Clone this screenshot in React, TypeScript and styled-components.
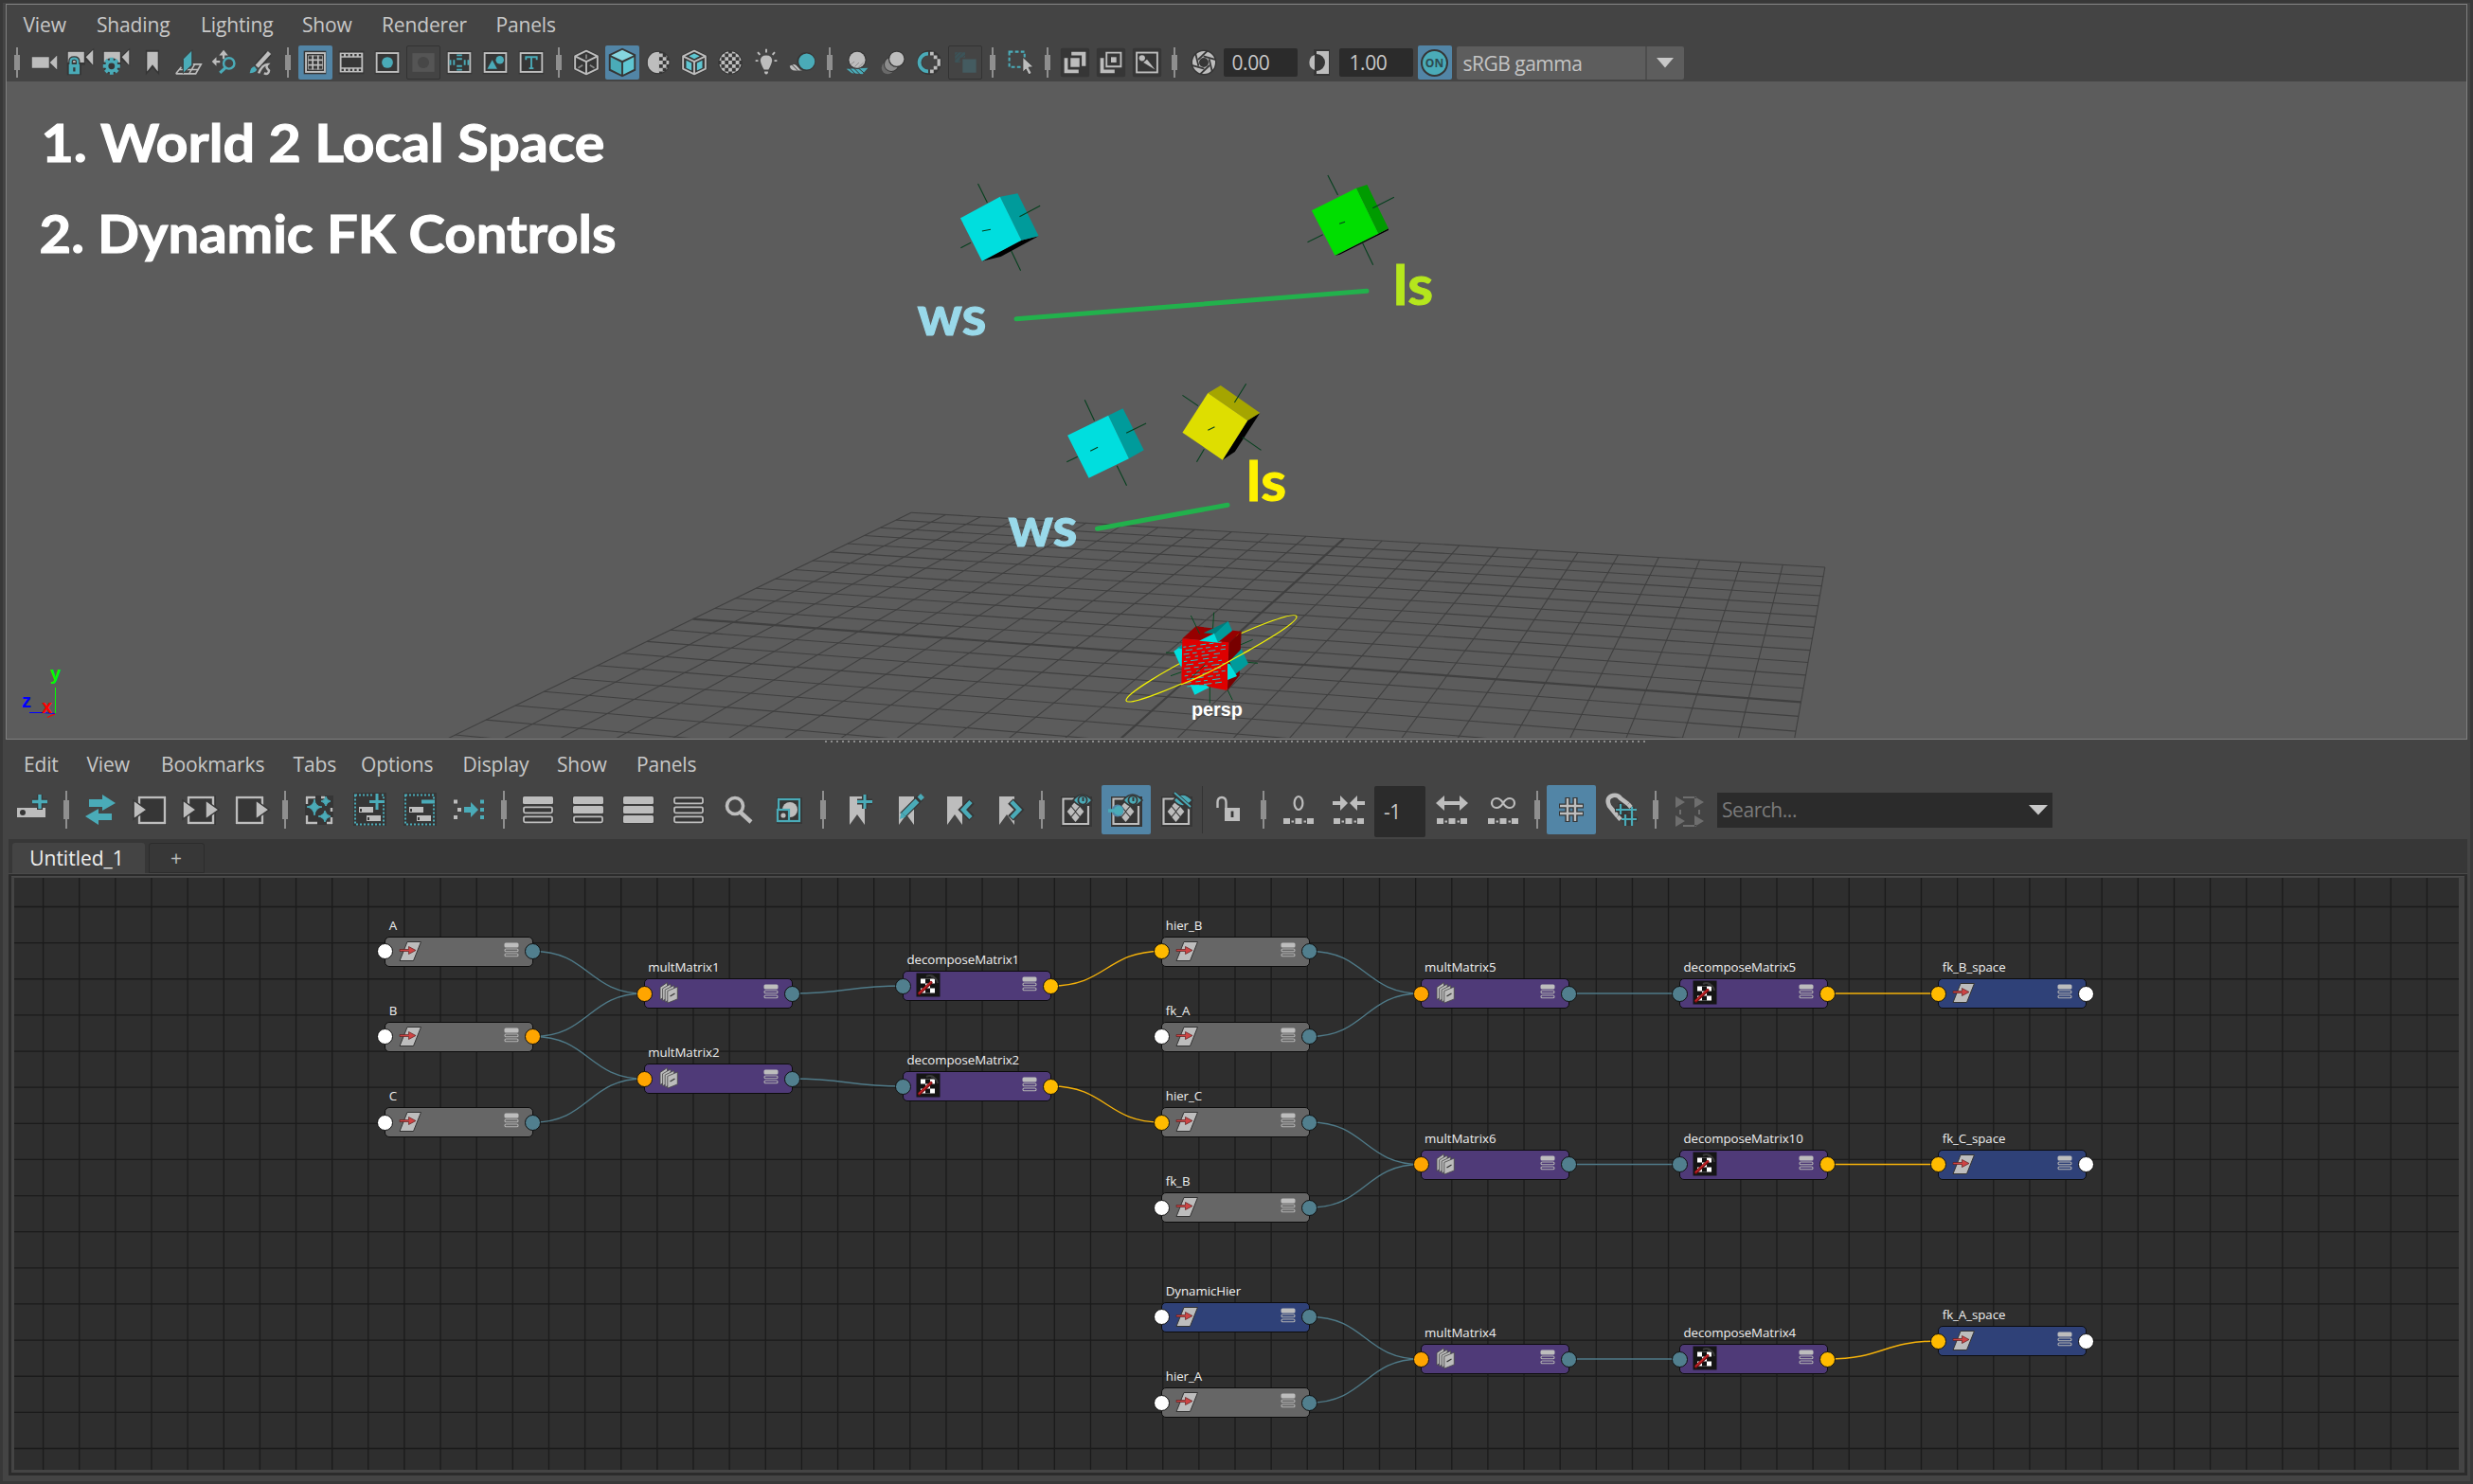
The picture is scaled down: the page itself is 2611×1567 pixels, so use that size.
import React from "react";
import styled, { createGlobalStyle, css } from "styled-components";

const TEAL = "#4aabb8";
const LIGHT = "#bdbdbd";
const DARK = "#363636";
const UI = `"Open Sans", "Noto Sans", sans-serif`;

const Global = createGlobalStyle`
  * { box-sizing: border-box; }
  html, body { margin: 0; padding: 0; background: #383838; }
  body { width: 2611px; height: 1567px; overflow: hidden; font-family: ${UI}; }
`;

/* ---------- frame ---------- */
const Window = styled.div`
  width: 2611px;
  height: 1567px;
  padding: 3px;
  background: #383838;
`;
const Workspace = styled.div`
  display: flex;
  flex-direction: column;
  width: 2605px;
  height: 1561px;
  padding: 1px 3px 6px 3px;
  background: #444444;
`;
const ViewPanel = styled.section`
  display: flex;
  flex-direction: column;
  flex: none;
  height: 777px;
  border: 1px solid #808080;
`;
const MenuBar = styled.nav<{ $h: number; $pad: number }>`
  display: flex;
  align-items: center;
  flex: none;
  height: ${(p) => p.$h}px;
  padding-left: ${(p) => p.$pad}px;
`;
const MenuItem = styled.span<{ $w: number }>`
  width: ${(p) => p.$w}px;
  color: #c8c8c8;
  font-size: 21px;
  line-height: 30px;
  letter-spacing: -0.15px;
  white-space: nowrap;
`;
const Toolbar = styled.div<{ $h: number; $pad: number; $lift?: number }>`
  display: flex;
  align-items: center;
  flex: none;
  height: ${(p) => p.$h}px;
  padding-left: ${(p) => p.$pad}px;
  padding-bottom: ${(p) => p.$lift ?? 0}px;
`;
const Slot = styled.div<{ $w?: number }>`
  display: flex;
  flex: none;
  align-items: center;
  justify-content: center;
  width: ${(p) => p.$w ?? 38}px;
`;
const Btn = styled.div<{ $on?: boolean; $off?: boolean; $big?: boolean }>`
  display: flex;
  align-items: center;
  justify-content: center;
  width: ${(p) => (p.$big ? 52 : 36)}px;
  height: ${(p) => (p.$big ? 52 : 36)}px;
  border-radius: 2px;
  ${(p) => p.$on && css`background: #5285a6;`}
  ${(p) => p.$off && css`border: 1px solid #333333;`}
`;
const SepBox = styled.div<{ $w: number; $h: number }>`
  display: flex;
  flex: none;
  align-items: center;
  justify-content: center;
  width: ${(p) => p.$w}px;
  height: ${(p) => p.$h}px;
  background: linear-gradient(#8f8f8f, #8f8f8f) center / 2px 100% no-repeat,
    linear-gradient(#8f8f8f, #8f8f8f) center / 6px 50% no-repeat;
`;
const Field = styled.div<{ $w: number; $h: number; $ml?: number; $pl: number; $drop?: boolean }>`
  display: flex;
  flex: none;
  align-items: center;
  width: ${(p) => p.$w}px;
  height: ${(p) => p.$h}px;
  margin-left: ${(p) => p.$ml ?? 0}px;
  padding-left: ${(p) => p.$pl}px;
  border-radius: 2px;
  background: #2b2b2b;
  color: #c8c8c8;
  font-size: 21px;
  letter-spacing: -0.4px;
  ${(p) => p.$drop && css`
    align-self: flex-end;
    margin-bottom: -3px;
  `}
`;
const Combo = styled.div`
  display: flex;
  flex: none;
  width: 240px;
  height: 35px;
  border-radius: 2px;
  background: #5d5d5d;
  color: #c4c4c4;
  font-size: 21px;
  line-height: 37px;
  letter-spacing: -0.5px;
`;
const ComboText = styled.span`
  width: 201px;
  padding-left: 7px;
  border-right: 2px solid #4d4d4d;
`;
const ComboArrow = styled.span`
  display: flex;
  flex: 1;
  align-items: center;
  justify-content: center;
`;
const Search = styled.div`
  display: flex;
  flex: none;
  align-items: center;
  justify-content: space-between;
  width: 354px;
  height: 37px;
  margin-left: 3px;
  padding: 0 5px;
  background: #2b2b2b;
  color: #7a7a7a;
  font-size: 21px;
  letter-spacing: -0.45px;
`;
const Viewport = styled.div`
  flex: 1;
  min-height: 0;
  overflow: hidden;
  background: #5c5c5c;
`;
const Scene = styled.svg`
  display: block;
`;

const Splitter = styled.div`
  flex: none;
  width: 867px;
  height: 2px;
  margin: 1px 0 0 865px;
  background: repeating-linear-gradient(90deg, #8c8c8c 0 2px, transparent 2px 6px);
`;
const EditorPanel = styled.section`
  display: flex;
  flex-direction: column;
  flex: 1;
  min-height: 0;
`;
const TabBar = styled.div`
  display: flex;
  align-items: flex-end;
  flex: none;
  gap: 4px;
  height: 36px;
  margin: 0 0 0 3px;
  padding-left: 4px;
  background: #373737;
`;
const Tab = styled.div<{ $active?: boolean }>`
  display: flex;
  align-items: center;
  justify-content: center;
  width: ${(p) => (p.$active ? 140 : 59)}px;
  height: 32px;
  border-radius: 3px 3px 0 0;
  color: ${(p) => (p.$active ? "#eeeeee" : "#bbbbbb")};
  background: ${(p) => (p.$active ? "#444444" : "#373737")};
  border: ${(p) => (p.$active ? "none" : "1px solid #2c2c2c")};
  font-size: 21px;
  padding-right: ${(p) => (p.$active ? 4 : 1)}px;
`;
const CanvasFrame = styled.div`
  flex: 1;
  min-height: 0;
  margin: 0 0 0 3px;
  border: 3px solid #2b2b2b;
  border-top: 2px solid #2b2b2b;
  box-shadow: inset 0 1px 0 #4a4a4a;
  background: #444444;
  padding: 2px 3px 3px 3px;
`;
const Canvas = styled.div`
  position: relative;
  width: 2581px;
  height: 625px;
  overflow: hidden;
  background: #2e2e2e;
`;
const TabEdge = styled.div`
  flex: none;
  height: 1px;
  margin-left: 3px;
  background: #4a4a4a;
`;

/* ---------- icons ---------- */
const Ico = ({ children, s = 38 }: { children: React.ReactNode; s?: number }) => (
  <svg width={s} height={s} viewBox={`${-s / 2} ${-s / 2} ${s} ${s}`} fill="none">
    {children}
  </svg>
);

const Frame = ({ children }: { children?: React.ReactNode }) => (
  <>
    <rect x={-14} y={-13} width={28} height={26} fill={DARK} />
    <rect x={-12} y={-10.5} width={24} height={21} stroke={LIGHT} strokeWidth={2} />
    {children}
  </>
);
const Checks = ({ x0, y0, n, m, s, fill }: { x0: number; y0: number; n: number; m: number; s: number; fill: string }) => {
  let d = "";
  for (let i = 0; i < n; i++)
    for (let j = 0; j < m; j++) if ((i + j) % 2 === 0) d += `M${x0 + i * s} ${y0 + j * s}h${s}v${s}h${-s}z`;
  return <path d={d} fill={fill} />;
};
const Gear = () => (
  <g transform="translate(-5.5 4)">
    {[0, 45, 90, 135].map((a) => (
      <rect key={a} x={-2} y={-9.5} width={4} height={19} fill={TEAL} transform={`rotate(${a})`} />
    ))}
    <circle r={7} fill={TEAL} />
    <circle r={3.6} fill={DARK} />
  </g>
);
const SmallCam = () => (
  <>
    <path d="M-15 -13H5V-7L15 -16V4L5 -3V3H-15Z" fill={DARK} />
    <path d="M-14 -12H4V0H-14ZM6 -6L14 -14V3Z" fill={LIGHT} />
  </>
);
const CubeWire = ({ c = LIGHT }: { c?: string }) => (
  <path d="M0 -13L12.5 -7V7L0 13L-12.5 7V-7ZM-12.5 -7L0 -1L12.5 -7M0 -1V13" stroke={c} strokeWidth={2} strokeLinejoin="round" />
);

const topIcons: Record<string, React.ReactNode> = {
  cam: <path d="M-14 -6H5V6H-14ZM6 0L14 -8V8Z" fill={LIGHT} stroke={DARK} strokeWidth={1} paintOrder="stroke" />,
  camLock: (
    <>
      <SmallCam />
      <path d="M-15 1H1V14H-15Z" fill={DARK} />
      <path d="M-11 3V-1Q-11 -4.5 -7 -4.5T-3 -1V3" stroke={DARK} strokeWidth={5} />
      <path d="M-11 3V-1Q-11 -4.5 -7 -4.5T-3 -1V3" stroke={TEAL} strokeWidth={2.4} />
      <rect x={-13} y={2} width={12} height={11} fill={TEAL} />
      <path d="M-7 5.5V10" stroke={DARK} strokeWidth={2.4} />
    </>
  ),
  camGear: (
    <>
      <SmallCam />
      <circle cx={-5.5} cy={4} r={9} fill={DARK} />
      <Gear />
    </>
  ),
  bookmark: (
    <>
      <path d="M-7.5 -14H7.5V14L0 6L-7.5 14Z" fill={DARK} />
      <path d="M-6 -12H6V10L0 2.5L-6 10Z" fill={LIGHT} />
    </>
  ),
  plane: (
    <>
      <path d="M-14 12.5H8L14 2H5" stroke={LIGHT} strokeWidth={1.8} />
      <path d="M-14 12.5L-8 5M1 12L7 2M-10 8H11M-6 12L-1 5" stroke={LIGHT} strokeWidth={1.6} />
      <path d="M-6 -4L4 -14V3L-6 12Z" fill={TEAL} stroke={DARK} strokeWidth={1} />
    </>
  ),
  panZoom: (
    <>
      <path d="M-1 -4V-10M-5 -1H-10" stroke={LIGHT} strokeWidth={2.4} />
      <path d="M-6 -8L-1 -14L4 -8ZM-9 -6L-14 -1L-9 4Z" fill={LIGHT} />
      <circle cx={5} cy={1} r={6} fill="#444444" stroke={TEAL} strokeWidth={2.6} />
      <path d="M1 6L-5 11.5" stroke={TEAL} strokeWidth={3.4} />
    </>
  ),
  brush: (
    <>
      <path d="M9 -10L-4 5" stroke={DARK} strokeWidth={8} />
      <path d="M10 -11L-4 4.5" stroke={LIGHT} strokeWidth={4.6} />
      <path d="M-12 12Q-11 5 -6.5 4.5L-4 8Q-6 12 -12 12Z" fill={TEAL} />
      <path d="M-2 12Q2 2 8 2Q5 5 9.5 9Q9 14 4 12" stroke={LIGHT} strokeWidth={2.6} />
    </>
  ),
  grid: (
    <>
      <rect x={-13} y={-13} width={25} height={26} fill={DARK} />
      <rect x={-10.5} y={-10.5} width={21} height={21} stroke={LIGHT} strokeWidth={2} />
      <path d="M-8 -7.5h16v15h-16z" stroke={LIGHT} strokeWidth={0.8} />
      <path d="M-3 -8V8M3 -8V8M-8 -2.7H8M-8 2.7H8" stroke={LIGHT} strokeWidth={1.8} />
    </>
  ),
  film: (
    <>
      <rect x={-14} y={-13} width={28} height={26} fill={DARK} />
      <rect x={-13} y={-11} width={26} height={22} fill={LIGHT} />
      <rect x={-11} y={-5.5} width={22} height={11} fill={DARK} />
      <path d="M-11 -8.3H12M-11 8.3H12" stroke={DARK} strokeWidth={2.4} strokeDasharray="2.5 2.3" />
    </>
  ),
  gate: (
    <Frame>
      <circle r={6.2} fill={TEAL} />
    </Frame>
  ),
  gateOff: (
    <>
      <rect x={-13} y={-11} width={26} height={22} fill="#555555" />
      <circle r={6.8} fill="#474747" />
    </>
  ),
  fieldChart: (
    <Frame>
      <path d="M-3 -8H3M-3 -4H3M-3 4H3M-3 8H3M-10 -3V3M-6 -3V3M6 -3V3M10 -3V3" stroke={TEAL} strokeWidth={2} />
    </Frame>
  ),
  safeAction: (
    <Frame>
      <path d="M-9 7L-3.5 -3L2 7Z" fill={TEAL} />
      <circle cx={5} cy={-3} r={4.5} fill={TEAL} />
    </Frame>
  ),
  safeTitle: (
    <Frame>
      <path d="M-6 -3V-6H6V-3M0 -6V6.5M-2.5 6.5H2.5" stroke={TEAL} strokeWidth={2} />
    </Frame>
  ),
  wire: (
    <>
      <path d="M0 -15L14.5 -8V8L0 15L-14.5 8V-8Z" fill={DARK} />
      <path d="M0 -9V-4M-9 6L-4 3M9 6L4 3" stroke="#8a8a8a" strokeWidth={1.8} />
      <CubeWire />
    </>
  ),
  shaded: (
    <>
      <path d="M0 -16L15 -9V9L0 16L-15 9V-9Z" fill={DARK} />
      <path d="M0 -14L12.5 -8L0 -2L-12.5 -8Z" fill="#86d6e0" />
      <path d="M-13 -6L-1 0V13.5L-13 7.5Z" fill={TEAL} />
      <path d="M13 -6L1 0V13.5L13 7.5Z" fill="#5fc6d2" />
    </>
  ),
  halfSphere: (
    <>
      <circle r={13} fill={DARK} />
      <clipPath id="hs">
        <circle r={12} />
      </clipPath>
      <g clipPath="url(#hs)">
        <rect x={-12} y={-12} width={13} height={24} fill={LIGHT} />
        <Checks x0={1} y0={-10} n={4} m={7} s={4} fill={LIGHT} />
      </g>
    </>
  ),
  texCube: (
    <>
      <path d="M0 -15L14.5 -8V8L0 15L-14.5 8V-8Z" fill={DARK} />
      <path d="M0 -10L6 -7L0 -4L-6 -7ZM-9 -2.5L-3 .5V9L-9 6ZM9 -2.5L3 .5V9L9 6Z" fill="#5fc6d2" />
      <CubeWire />
    </>
  ),
  checker: (
    <>
      <circle r={13.5} fill={DARK} />
      <clipPath id="ck">
        <circle r={12.3} />
      </clipPath>
      <g clipPath="url(#ck)">
        <Checks x0={-14} y0={-14} n={7} m={7} s={4} fill={LIGHT} />
      </g>
    </>
  ),
  bulb: (
    <>
      <path d="M0 -8Q6.5 -8 6.5 -2Q6 2 2.5 8H-2.5Q-6 2 -6.5 -2Q-6.5 -8 0 -8Z" fill={LIGHT} />
      <path d="M-2 10H2V12L0 13.5L-2 12Z" fill={LIGHT} />
      <path d="M0 -15V-11M-9.5 -11.5L-7 -8.5M9.5 -11.5L7 -8.5M-12 -2H-9M12 -2H9" stroke={LIGHT} strokeWidth={2} />
    </>
  ),
  shadow: (
    <>
      <circle cx={4.5} cy={-1} r={10.5} fill={DARK} />
      <circle cx={5} cy={-1} r={9} fill={TEAL} />
      <path d="M-14 4Q-8 0 -4 5Q-2 8 0 9H-8Q-13 9 -14 4Z" fill={LIGHT} />
      <path d="M-12 2L-5 9M-8 1L-1 9" stroke={DARK} strokeWidth={1} />
    </>
  ),
  ao: (
    <>
      <path d="M-12 7L12 6L6 13L-6 12Z" fill={TEAL} />
      <path d="M-9 6L-2 13M-4 6L3 13M1 6L8 12" stroke={DARK} strokeWidth={1} />
      <circle cy={-3} r={10.3} fill={DARK} />
      <circle cy={-3} r={9} fill={LIGHT} />
      <path d="M-3 5L2 0M1 6L7 0M-7 2L-3 -1" stroke="#8a8a8a" strokeWidth={1} />
    </>
  ),
  blur: (
    <>
      <circle cx={-6} cy={6} r={7} fill="#6a6a6a" />
      <circle cx={-2} cy={2} r={8.5} fill={DARK} />
      <circle cx={-2} cy={2} r={7.5} fill="#8c8c8c" />
      <circle cx={4} cy={-4} r={9.3} fill={DARK} />
      <circle cx={4} cy={-4} r={8} fill={LIGHT} />
    </>
  ),
  aa: (
    <>
      <circle r={11} stroke={DARK} strokeWidth={5.5} />
      <path d="M-1 -10A10 10 0 0 0 -1 10" stroke={TEAL} strokeWidth={4} />
      <path d="M1 -12H5V-8H1ZM5 -8H9V-4H5ZM9 -4H12.5V4H9ZM5 4H9V8H5ZM1 8H5V12H1Z" fill={LIGHT} />
    </>
  ),
  dof: (
    <>
      <rect x={-3} y={-4} width={16} height={16} fill="#445b60" />
      <path d="M-12 -12H0V-6H-6V0H-12Z" fill="#3c5358" />
      <path d="M-12 -8L-8 -12M-12 -3L-3 -12M-8 -1L0 -9" stroke="#444444" strokeWidth={1} />
    </>
  ),
  isolate: (
    <>
      <rect x={-12} y={-12} width={17} height={17} stroke={TEAL} strokeWidth={2.2} strokeDasharray="4 2.4" />
      <path d="M3 -6L15 5L9.5 5.5L13 12L9.5 13.5L6.5 7.5L3 11Z" fill={LIGHT} stroke={DARK} strokeWidth={1} />
    </>
  ),
  xray: (
    <>
      <rect x={-16} y={-16} width={32} height={32} rx={2} fill={DARK} />
      <path d="M-4 -12H12V4H7.5V-8H-4Z" fill={LIGHT} />
      <path d="M-12 -5H-8V8H4V12H-12Z" fill={LIGHT} />
      <path d="M-5 -5H5V5H-5Z" fill={LIGHT} />
    </>
  ),
  xrayActive: (
    <>
      <rect x={-16} y={-16} width={32} height={32} rx={2} fill={DARK} />
      <path d="M-5 -11H11V4.5H-5Z" stroke={LIGHT} strokeWidth={2} />
      <rect x={0} y={-6} width={6} height={6} fill={LIGHT} />
      <path d="M-12 -5H-8V8H4V12H-12Z" fill={LIGHT} />
    </>
  ),
  xrayJoint: (
    <>
      <rect x={-16} y={-16} width={32} height={32} rx={2} fill={DARK} />
      <rect x={-11.5} y={-11} width={23} height={22} stroke={LIGHT} strokeWidth={2} />
      <circle cx={-5.5} cy={-5} r={3.3} fill={LIGHT} />
      <path d="M-4 0L0 -3.5L9 8Z" fill={LIGHT} />
    </>
  ),
  aperture: (
    <>
      <circle r={13.5} fill={DARK} />
      <circle r={8.5} stroke={LIGHT} strokeWidth={7} />
      {[0, 60, 120, 180, 240, 300].map((a) => (
        <path key={a} d="M-6 -3L4 -12.5" stroke={DARK} strokeWidth={1.8} transform={`rotate(${a})`} />
      ))}
    </>
  ),
  gamma: (
    <>
      <rect x={-5} y={-14} width={17} height={28} fill={DARK} />
      <path d="M-4 -8A8.5 8.5 0 0 0 -4 8Z" fill={LIGHT} />
      <path d="M-2 -12H11V12H-2V9A9 9 0 0 0 -2 -9Z" fill={LIGHT} />
    </>
  ),
};
const On = styled.div`
  display: flex;
  align-items: center;
  justify-content: center;
  width: 29px;
  height: 29px;
  border: 2px solid ${DARK};
  border-radius: 50%;
  background: ${TEAL};
  color: #2c4a50;
  font: 700 12px ${UI};
`;

const Bookm = ({ x }: { x: number }) => <path transform={`translate(${x} 0)`} d="M-8 -14H8V16L0 5L-8 16Z" fill={LIGHT} />;
const Bars = ({ open }: { open: boolean[] }) => (
  <>
    <rect x={-17} y={-15} width={34} height={30} rx={2} fill={DARK} opacity={0.5} />
    {open.map((o, i) => (
      <rect
        key={i}
        x={o ? -15 : -16}
        y={-13.5 + i * 10 + (o ? 0.8 : -0.5)}
        width={o ? 30 : 32}
        height={o ? 6 : 8}
        rx={1.5}
        fill={o ? DARK : LIGHT}
        stroke={o ? LIGHT : "none"}
        strokeWidth={1.8}
      />
    ))}
  </>
);
const Dots = () => <path d="M-16 9H-9V15H-16ZM-3.5 9H3.5V15H-3.5ZM9 9H16V15H9ZM-7.5 11.5h2.5v2h-2.5zM5.5 11.5h2.5v2h-2.5z" fill={LIGHT} />;
const Page = () => (
  <>
    <rect x={-16} y={-14} width={33} height={32} fill={DARK} />
    <path d="M-2 -11.5H-13.5V15H13V-4" stroke={LIGHT} strokeWidth={2.2} />
    {[[-5.2, 2], [4.2, 2], [-0.5, -4], [-0.5, 8]].map(([x, y]) => (
      <path key={`${x},${y}`} d={`M${x} ${y - 5}L${x + 4.2} ${y}L${x} ${y + 5}L${x - 4.2} ${y}Z`} fill={LIGHT} />
    ))}
  </>
);
const Eye = () => (
  <>
    <path d="M-3 -10Q6.500 -22 17 -10Q6.500 2 -3 -10Z" fill={TEAL} stroke={DARK} strokeWidth={1.6} />
    <circle cx={7} cy={-10} r={4.6} fill={TEAL} stroke={DARK} strokeWidth={1.8} />
    <path d="M7.5 -13V-9" stroke={DARK} strokeWidth={2} />
  </>
);

const editIcons: Record<string, React.ReactNode> = {
  addNode: (
    <>
      <rect x={-16} y={-2} width={30} height={10} fill={LIGHT} />
      <circle cx={-10} cy={3} r={3} fill={DARK} />
      <path d="M8 -16V0M0 -8.5H16" stroke={DARK} strokeWidth={6} />
      <path d="M8 -16V-1M0 -8.5H16" stroke={TEAL} strokeWidth={3.4} />
    </>
  ),
  swap: (
    <>
      <path d="M-12 -11H2V-16L16 -7L2 1V-3H-12Z" fill={TEAL} />
      <path d="M12 4V11H-2V16L-16 7L-2 -1V4Z" fill={TEAL} />
    </>
  ),
  graphIn: (
    <>
      <rect x={-14} y={-15} width={31} height={31} fill={DARK} />
      <rect x={-12} y={-13} width={27} height={27} stroke={LIGHT} strokeWidth={2.4} />
      <path d="M-18 -10L-4 0L-18 10Z" fill={LIGHT} stroke={DARK} strokeWidth={1.5} />
    </>
  ),
  graphInOut: (
    <>
      <rect x={-15} y={-15} width={31} height={31} fill={DARK} />
      <rect x={-13} y={-13} width={26} height={27} stroke={LIGHT} strokeWidth={2.4} />
      <path d="M-19 -10L-5 0L-19 10ZM5 -10L19 0L5 10Z" fill={LIGHT} stroke={DARK} strokeWidth={1.5} />
    </>
  ),
  graphOut: (
    <>
      <rect x={-17} y={-15} width={31} height={31} fill={DARK} />
      <rect x={-15} y={-13} width={27} height={27} stroke={LIGHT} strokeWidth={2.4} />
      <path d="M5 -10L19 0L5 10Z" fill={LIGHT} stroke={DARK} strokeWidth={1.5} />
    </>
  ),
  rearrange: (
    <>
      <rect x={-15} y={-15} width={30} height={31} fill={DARK} />
      <path d="M-13 -6V-13H-4M2 -13H6M13 -2V2M13 8V14H8M-13 6V14H-2" stroke={LIGHT} strokeWidth={2.4} />
      <path d="M-5 -11Q-4 -3 3 -3Q-4 -2 -5 6Q-6 -2 -13 -3Q-6 -4 -5 -11ZM7 -14Q8 -9.5 12 -9Q8 -8 7 -4Q6 -8 2 -9Q6 -9.5 7 -14ZM6 1Q7 6 12 7Q7 8 6 13Q5 8 -1 7Q5 6 6 1Z" fill={TEAL} stroke={TEAL} strokeWidth={1} strokeLinejoin="round" />
    </>
  ),
  addSel: (
    <>
      <rect x={-17} y={-18} width={35} height={35} fill={DARK} />
      <rect x={-15} y={-15.5} width={30} height={31} stroke={TEAL} strokeWidth={2} strokeDasharray="2 2" />
      <path d="M-11 -3H4V3H-11ZM-3 6H12V12H-3Z" fill={LIGHT} />
      <path d="M-9 -1v3M-1 8v3" stroke={DARK} strokeWidth={2} />
      <path d="M8 -17V0M0 -8.5H16" stroke={DARK} strokeWidth={6} />
      <path d="M8 -17V0M0 -8.5H16" stroke={TEAL} strokeWidth={3} />
    </>
  ),
  removeSel: (
    <>
      <rect x={-17} y={-18} width={35} height={35} fill={DARK} />
      <rect x={-15} y={-15.5} width={30} height={31} stroke={TEAL} strokeWidth={2} strokeDasharray="2 2" />
      <path d="M-11 -3H4V3H-11ZM-3 6H12V12H-3Z" fill={LIGHT} />
      <path d="M-9 -1v3M-1 8v3" stroke={DARK} strokeWidth={2} />
      <path d="M2 -8.5H16" stroke={TEAL} strokeWidth={4} />
    </>
  ),
  pin: (
    <>
      <path d="M-17 -10.5h4v4h-4zM-13 -2h4v4h-4zM-17 6h4v4h-4z" fill={LIGHT} />
      <path d="M-6 -3H1V-8L9 0L1 8V3H-6Z" fill={TEAL} />
      <path d="M11 -10.5h4v4h-4zM11 -2h4v4h-4zM11 6h4v4h-4z" fill={TEAL} />
    </>
  ),
  bars1: <Bars open={[false, true, true]} />,
  bars2: <Bars open={[false, false, true]} />,
  bars3: <Bars open={[false, false, false]} />,
  bars4: <Bars open={[true, true, true]} />,
  lens: (
    <>
      <circle cx={-4} cy={-4} r={8.5} stroke={LIGHT} strokeWidth={3.6} />
      <path d="M2 3L13 13" stroke={LIGHT} strokeWidth={4.4} />
    </>
  ),
  swatch: (
    <>
      <rect x={-13} y={-13} width={27} height={28} fill={DARK} />
      <rect x={-11} y={-11} width={22} height={23} stroke={TEAL} strokeWidth={2.2} />
      <circle cx={1} cy={0} r={8} fill={LIGHT} />
      <rect x={-12} y={0} width={12} height={12} fill={DARK} stroke={TEAL} strokeWidth={2.2} />
      <circle cx={-6} cy={6} r={2.6} fill={LIGHT} />
    </>
  ),
  bmAdd: (
    <>
      <Bookm x={0} />
      <path d="M8 -16V-1M0 -8.5H16" stroke={DARK} strokeWidth={6} />
      <path d="M8 -16V-1M0 -8.5H16" stroke={TEAL} strokeWidth={3} />
    </>
  ),
  bmEdit: (
    <>
      <Bookm x={-1} />
      <path d="M14 -13L-5 6" stroke={DARK} strokeWidth={8} />
      <path d="M16 -15L12.5 -11.5M10.500 -9.500L-4 5" stroke={TEAL} strokeWidth={5.5} />
      <path d="M-8 10L-6.5 2.5L-1.5 7.5Z" fill={TEAL} />
    </>
  ),
  bmPrev: (
    <>
      <Bookm x={-3} />
      <path d="M15 -9L6 0L15 9" stroke={DARK} strokeWidth={8} />
      <path d="M14 -8.5L6 0L14 8.5" stroke={TEAL} strokeWidth={4.5} />
    </>
  ),
  bmNext: (
    <>
      <Bookm x={-1} />
      <path d="M3 -9L12 0L3 9" stroke={DARK} strokeWidth={8} />
      <path d="M4 -8.5L12 0L4 8.5" stroke={TEAL} strokeWidth={4.5} />
    </>
  ),
  eye: (
    <>
      <Page />
      <Eye />
    </>
  ),
  eyePlug: (
    <>
      <Page />
      <circle cx={-9} cy={1} r={6.5} fill="#5285a6" />
      <circle cx={-8} cy={1} r={5} fill={TEAL} />
      <path d="M-19 1H-10" stroke={TEAL} strokeWidth={3.5} />
      <Eye />
    </>
  ),
  eyeOff: (
    <>
      <Page />
      <path d="M-3 -10Q6.500 -22 17 -10Q6.500 2 -3 -10Z" fill={TEAL} stroke={DARK} strokeWidth={1.6} />
      <path d="M-3 -18L15 -2" stroke={DARK} strokeWidth={5} />
      <path d="M-2 -18L15 -3" stroke={TEAL} strokeWidth={1.8} />
    </>
  ),
  unlock: (
    <>
      <path d="M-15 -2V-8Q-15 -13 -10.500 -13T-6 -8V0" stroke={LIGHT} strokeWidth={2.4} transform="translate(3.500 0)" />
      <rect x={-4} y={-2} width={16} height={14} fill={LIGHT} />
      <path d="M4 1.5V8" stroke={DARK} strokeWidth={2.8} />
    </>
  ),
  zero: (
    <>
      <ellipse cx={0} cy={-7} rx={4.4} ry={7} stroke={LIGHT} strokeWidth={2.2} />
      <Dots />
    </>
  ),
  inward: (
    <>
      <path d="M-17 -9H-9V-15L-1 -7L-9 1V-5H-17ZM17 -9H9V-15L1 -7L9 1V-5H17Z" fill={LIGHT} />
      <Dots />
    </>
  ),
  outward: (
    <>
      <path d="M-17 -7L-8 -15V-9H8V-15L17 -7L8 1V-5H-8V1Z" fill={LIGHT} />
      <Dots />
    </>
  ),
  inf: (
    <>
      <path d="M0 -7C-3 -12 -5.5 -12 -7 -12A5 5 0 0 0 -7 -2C-5.5 -2 -3 -2 0 -7C3 -12 5.5 -12 7 -12A5 5 0 0 1 7 -2C5.5 -2 3 -2 0 -7Z" stroke={LIGHT} strokeWidth={2.2} />
      <Dots />
    </>
  ),
  hash: (
    <>
      <path d="M-4 -13V13M4 -13V13M-13 -4H13M-13 4H13" stroke={DARK} strokeWidth={5.2} />
      <path d="M-4 -12V12M4 -12V12M-12 -4H12M-12 4H12" stroke={LIGHT} strokeWidth={2.4} />
    </>
  ),
  magnet: (
    <>
      <path d="M-4 7L-13 -4Q-17 -13 -9 -15Q-4 -16 -1 -12L7 -6" stroke={LIGHT} strokeWidth={4.600} />
      <path d="M-1 -7V7M-7 0H14M4 -4V17M9 4V17M0 10H17" stroke={DARK} strokeWidth={5} />
      <path d="M-1 -6V5M-6 0H16M4 5V17M11 -3V17M0 10H16" stroke={TEAL} strokeWidth={2.2} />
      <path d="M-4 7L-1 10.5M7 -6L10 -2.5" stroke={LIGHT} strokeWidth={4.400} />
    </>
  ),
  expand: (
    <path d="M-15 -14L-5 -8L-15 -2ZM15 -8L5 -14V-2ZM-15 6L-5 12L-15 18ZM15 12L5 6V18ZM-7 -14H7V-12H-7ZM-7 16H7V18H-7ZM-11 0H-9V5H-11ZM9 0H11V5H9Z" fill="#6e6e6e" />
  ),
};

const TOP_BAR: (string | null)[] = [
  null, "cam", "camLock", "camGear", "bookmark", "plane", "panZoom", "brush",
  null, "grid", "film", "gate", "gateOff", "fieldChart", "safeAction", "safeTitle",
  null, "wire", "shaded", "halfSphere", "texCube", "checker", "bulb", "shadow",
  null, "ao", "blur", "aa", "dof",
  null, "isolate",
  null, "xray", "xrayActive", "xrayJoint",
  null,
];
const EDIT_A: (string | null)[] = [
  "addNode", null, "swap", "graphIn", "graphInOut", "graphOut",
  null, "rearrange", "addSel", "removeSel", "pin",
  null, "bars1", "bars2", "bars3", "bars4", "lens", "swatch",
  null, "bmAdd", "bmEdit", "bmPrev", "bmNext",
  null, "eye", "eyePlug", "eyeOff",
];
const LIT = new Set(["grid", "shaded", "eyePlug", "hash"]);
const OFF = new Set(["gateOff", "dof"]);

const EditTool = ({ name, w = 53 }: { name: string; w?: number }) => (
  <Slot $w={w}>
    <Btn $big $on={LIT.has(name)}>
      <Ico s={44}>{editIcons[name]}</Ico>
    </Btn>
  </Slot>
);
const ThinRule = styled.div`
  flex: none;
  width: 1px;
  height: 50px;
  margin-left: 1px;
  background: #333333;
`;

/* ---------- 3D scene ---------- */
/* Perspective map of the ground plane: s runs left-right over the full width, t runs 0 at the back edge to 2 at the front. */
const project = (s: number, t: number): [number, number] => {
  const [x0, y0, x1, y1, x2, y2, x3, y3] = [962.2, 541.3, 1926.8, 599, 1901.5, 741.3, 731.6, 653.7];
  const dx1 = x1 - x2, dx2 = x3 - x2, dx3 = x0 - x1 + x2 - x3;
  const dy1 = y1 - y2, dy2 = y3 - y2, dy3 = y0 - y1 + y2 - y3;
  const den = dx1 * dy2 - dx2 * dy1;
  const g = (dx3 * dy2 - dx2 * dy3) / den;
  const h = (dx1 * dy3 - dx3 * dy1) / den;
  const w = 1 + g * s + h * t;
  return [
    ((x1 - x0 + g * x1) * s + (x3 - x0 + h * x3) * t + x0) / w,
    ((y1 - y0 + g * y1) * s + (y3 - y0 + h * y3) * t + y0) / w,
  ];
};
const GroundGrid = () => (
  <g stroke="#404040">
    {Array.from({ length: 25 }, (_, i) => {
      const a = project(i / 24, 0), b = project(i / 24, 2);
      const c = project(0, i / 12), d = project(1, i / 12);
      const sw = i === 12 ? 2.2 : 1.1;
      return (
        <g key={i} strokeWidth={sw}>
          <line x1={a[0]} y1={a[1]} x2={b[0]} y2={b[1]} />
          <line x1={c[0]} y1={c[1]} x2={d[0]} y2={d[1]} />
        </g>
      );
    })}
  </g>
);

type Cube = { faces: [string, string][]; lines: string };
const CUBES: Cube[] = [
  {
    faces: [
      ["245,317 350,251 396,238 295,303", "#000000"],
      ["293,113 340,103 396,238 350,251", "#009b9b"],
      ["187,181 293,113 350,251 245,317", "#00dede"],
    ],
    lines: "M234 72L259 132M345 176L400 142M188 275L215 259M323 285L348 347M245 222L268 217",
  },
  {
    faces: [
      ["1187,300 1303,230 1330,214 1330,219 1200,296", "#000000"],
      ["1244,86 1273,75 1330,214 1303,230", "#009b00"],
      ["1125,157 1244,86 1303,230 1187,299", "#00de00"],
    ],
    lines: "M1168 45L1195 108M1288 149L1345 115M1114 257L1155 233M1261 260L1289 329M1199 199L1214 193",
  },
  {
    faces: [
      ["582,806 621,784 677,916 637,943", "#009b9b"],
      ["473,869 582,806 637,943 530,1004", "#00dede"],
    ],
    lines: "M519 757L545 823M630 862L683 831M471 953L500 937M605 965L631 1028M534 919L554 907",
  },
  {
    faces: [
      ["954,822 987,798 920,921 887,947", "#000000"],
      ["848,735 882,711 987,798 954,822", "#a5a500"],
      ["780,860 848,735 954,822 887,947", "#dede00"],
    ],
    lines: "M780 742L822 776M950 706L919 765M940 875L990 916M838 913L818 953M848 853L866 842",
  },
];

/* Interpenetrating faces of the two boxes show as broken, slanted scan lines. */
const stripes = () => {
  let d = "";
  for (let r = 0; r < 12; r++) {
    const y = 370 + r * 11.5;
    let x = 448 + ((r * 7) % 13);
    let k = r;
    while (x < 572) {
      const len = 9 + ((k * 13) % 17);
      const e = Math.min(x + len, 582);
      d += `M${x} ${y - (x - 448) * 0.13}L${e} ${y - (e - 448) * 0.13}`;
      x = e + 9 + ((k * 5) % 9);
      k++;
    }
  }
  return d;
};

const Rig = () => (
  <g transform="translate(1100 560) scale(.33333)">
    <ellipse cx={537} cy={406} rx={301} ry={32} transform="rotate(-26.4 537 406)" stroke="#f4f400" strokeWidth={3.6} fill="none" />
    <path d="M472 270L500 328M545 260L541 318M393 387L420 389M668 346L610 371M620 415L684 421M408 461L442 449M532 495L532 548M588 505L604 538" stroke="#064a20" strokeWidth={3} />
    <polygon points="418,383 444,364 444,432 439,430" fill="#00dede" />
    <polygon points="428,372 444,364 444,376" fill="#009b9b" />
    <polygon points="445,343 488,304 632,320 592,357" fill="#960000" />
    <polygon points="592,357 632,320 626,460 588,506" fill="#780000" />
    <polygon points="445,343 592,355 588,500 442,486" fill="#de0000" />
    <polygon points="528,496 588,494 586,507" fill="#de0000" />
    <polygon points="545,325 590,288 603,318 556,356" fill="#009b9b" />
    <polygon points="512,325 590,288 548,328" fill="#007c7c" />
    <polygon points="498,350 546,326 558,356" fill="#00dede" />
    <polygon points="594,415 632,376 654,422 612,457" fill="#009b9b" />
    <polygon points="588,422 596,424 618,462 588,474" fill="#00dede" />
    <polygon points="470,490 484,521 530,498 520,490" fill="#00dede" />
    <path d={stripes()} stroke="#12cfd6" strokeWidth={2.8} />
    <path d="M470 470L517 425M500 328L488 304" stroke="#064a20" strokeWidth={3} />
    <path d="M440 489Q520 458 596 413L660 378" stroke="#f4f400" strokeWidth={3.6} fill="none" />
  </g>
);

const note = (x: number, y: number, w: number, fill: string, size: number, text: string) => (
  <text
    x={x}
    y={y}
    fill={fill}
    stroke={fill}
    strokeWidth={1.1}
    fontSize={size}
    fontWeight={700}
    fontFamily="Lato, Carlito, sans-serif"
    textLength={w}
    lengthAdjust="spacingAndGlyphs"
  >
    {text}
  </text>
);

const SceneView = () => (
  <Scene width={2597} height={693} viewBox="7 86 2597 693" fill="none">
    <GroundGrid />
    <g transform="translate(940 170) scale(.39544 .33333)">
      {CUBES.map((c, i) => (
        <g key={i}>
          {c.faces.map(([p, f]) => (
            <polygon key={p} points={p} fill={f} />
          ))}
          <path d={c.lines} stroke="#06401e" strokeWidth={1.1} vectorEffect="non-scaling-stroke" />
        </g>
      ))}
    </g>
    <g stroke="#22b14c" strokeWidth={5} strokeLinecap="round">
      <line x1={1073} y1={336.7} x2={1443} y2={307.3} />
      <line x1={1158.5} y1={558.3} x2={1296} y2={533.3} />
    </g>
    <Rig />
    {note(43.5, 171, 595, "#ffffff", 55, "1. World 2 Local Space")}
    {note(41.5, 267, 609, "#ffffff", 55, "2. Dynamic FK Controls")}
    {note(968.5, 353.5, 73, "#99d9ea", 57, "ws")}
    {note(1471, 322, 42, "#b5e61d", 57, "ls")}
    {note(1316, 529, 42, "#fff200", 57, "ls")}
    {note(1064.5, 576.5, 73, "#99d9ea", 57, "ws")}
    <text x={1258} y={756} fill="#ffffff" fontFamily="Liberation Sans, Arial, sans-serif" fontWeight={700} fontSize={19.8}>
      persp
    </text>
    <g fontFamily="Liberation Sans, Arial, sans-serif" fontWeight={700} fontSize={20}>
      <path d="M58.5 726V753" stroke="#00ff00" />
      <path d="M31 752.5H45L58 753.5" stroke="#0000ff" strokeWidth={1.2} />
      <path d="M58 754L50 757.5" stroke="#ff0000" strokeWidth={1.2} />
      <text x={53} y={718} fill="#00ff00">y</text>
      <text x={23} y={747} fill="#0000ff">z</text>
      <text x={44} y={753} fill="#ff0000">x</text>
    </g>
  </Scene>
);

/* ---------- node graph ---------- */
const ORANGE = "#ffa500", AMBER = "#ffbb00", PORT = "#517f8e", WHITE = "#ffffff";
const GREY = "#666666", PURPLE = "#4f3a78", BLUE = "#2f4178";
type Kind = "transform" | "mult" | "decompose";
type GraphNode = { id: string; col: number; y: number; fill: string; kind: Kind; in: string; out: string };
const n = (id: string, col: number, y: number, fill: string, kind: Kind, i: string, o: string): GraphNode => ({ id, col, y, fill, kind, in: i, out: o });
const NODES: GraphNode[] = [
  n("A", 0, 77.5, GREY, "transform", WHITE, PORT),
  n("B", 0, 167.5, GREY, "transform", WHITE, ORANGE),
  n("C", 0, 258, GREY, "transform", WHITE, PORT),
  n("multMatrix1", 1, 122, PURPLE, "mult", ORANGE, PORT),
  n("multMatrix2", 1, 212, PURPLE, "mult", ORANGE, PORT),
  n("decomposeMatrix1", 2, 114, PURPLE, "decompose", PORT, AMBER),
  n("decomposeMatrix2", 2, 220, PURPLE, "decompose", PORT, AMBER),
  n("hier_B", 3, 77.5, GREY, "transform", AMBER, PORT),
  n("fk_A", 3, 167.5, GREY, "transform", WHITE, PORT),
  n("hier_C", 3, 258, GREY, "transform", AMBER, PORT),
  n("fk_B", 3, 348, GREY, "transform", WHITE, PORT),
  n("DynamicHier", 3, 463.5, BLUE, "transform", WHITE, PORT),
  n("hier_A", 3, 554, GREY, "transform", WHITE, PORT),
  n("multMatrix5", 4, 122, PURPLE, "mult", ORANGE, PORT),
  n("multMatrix6", 4, 302.5, PURPLE, "mult", ORANGE, PORT),
  n("multMatrix4", 4, 508, PURPLE, "mult", ORANGE, PORT),
  n("decomposeMatrix5", 5, 122, PURPLE, "decompose", PORT, AMBER),
  n("decomposeMatrix10", 5, 302.5, PURPLE, "decompose", PORT, AMBER),
  n("decomposeMatrix4", 5, 508, PURPLE, "decompose", PORT, AMBER),
  n("fk_B_space", 6, 122, BLUE, "transform", AMBER, WHITE),
  n("fk_C_space", 6, 302.5, BLUE, "transform", AMBER, WHITE),
  n("fk_A_space", 6, 489, BLUE, "transform", AMBER, WHITE),
];
const WIRES: [string, string][] = [
  ["A", "multMatrix1"], ["B", "multMatrix1"], ["B", "multMatrix2"], ["C", "multMatrix2"],
  ["multMatrix1", "decomposeMatrix1"], ["multMatrix2", "decomposeMatrix2"],
  ["decomposeMatrix1", "hier_B"], ["decomposeMatrix2", "hier_C"],
  ["hier_B", "multMatrix5"], ["fk_A", "multMatrix5"],
  ["hier_C", "multMatrix6"], ["fk_B", "multMatrix6"],
  ["DynamicHier", "multMatrix4"], ["hier_A", "multMatrix4"],
  ["multMatrix5", "decomposeMatrix5"], ["multMatrix6", "decomposeMatrix10"], ["multMatrix4", "decomposeMatrix4"],
  ["decomposeMatrix5", "fk_B_space"], ["decomposeMatrix10", "fk_C_space"], ["decomposeMatrix4", "fk_A_space"],
];
const left = (col: number) => 391.3 + col * 273.33;

const NodeBox = styled.div<{ $x: number; $y: number }>`
  position: absolute;
  left: ${(p) => p.$x}px;
  top: ${(p) => p.$y - 39}px;
  width: 157px;
`;
const NodeLabel = styled.div`
  height: 23px;
  padding-left: 4.5px;
  color: #eeeeee;
  font-size: 13.3px;
  line-height: 22.5px;
  letter-spacing: -0.06px;
  white-space: nowrap;
`;
const NodeBody = styled.div<{ $fill: string }>`
  display: flex;
  align-items: center;
  justify-content: space-between;
  width: 157px;
  height: 32px;
  border: 1.5px solid #0c0c0c;
  border-radius: 5px;
  background: ${(p) => p.$fill};
`;
const Port = styled.span<{ $c: string; $side: "in" | "out" }>`
  flex: none;
  width: 17px;
  height: 17px;
  border: 1px solid #101010;
  border-radius: 50%;
  background: ${(p) => p.$c};
  margin: ${(p) => (p.$side === "in" ? "0 4px 0 -9px" : "0 -9px 0 6px")};
`;
const Grow = styled.span`
  flex: 1;
`;
const Wires = styled.svg`
  display: block;
`;

const Badge = ({ kind }: { kind: Kind }) => {
  if (kind === "transform")
    return (
      <svg width={28} height={28} viewBox="0 0 28 28">
        <path d="M11 3.500H25.5L17.5 23.500H3Z" fill="#bdbdbd" stroke="#333333" strokeWidth={1} />
        <path d="M3 11.500H12.500V8.5L20 12.500L12.500 16.500V13.500H3Z" fill="#cf4444" stroke="#5a2020" strokeWidth={0.7} />
      </svg>
    );
  if (kind === "mult")
    return (
      <svg width={28} height={28} viewBox="0 0 28 28">
        {[0, 1, 2, 3].map((i) => (
          <path
            key={i}
            d={`M${4 + i * 2.6} ${7.5 + i * 1.3}L${14.5 + i * 2.6 - (3 - i)} ${2.5 + i * 1.5}V${16 + i * 1.3}L${4 + i * 2.6} ${20.5 + i * 1.2}Z`}
            fill="#bcbcbc"
            stroke="#454545"
            strokeWidth={0.8}
          />
        ))}
        <path d="M14.5 17L19.500 14" stroke="#333333" strokeWidth={1.2} fill="none" />
      </svg>
    );
  return (
    <svg width={28} height={28} viewBox="0 0 28 28">
      <rect x={1.5} y={0.5} width={25} height={25} fill="#151515" />
      <rect x={6} y={6.500} width={15} height={15} fill="#ffffff" />
      <path d="M11 6.500h5v5h-5zM6 11.500h5v5h-5zM16 11.500h5v5h-5zM11 16.500h5v5h-5z" fill="#111111" />
      <path d="M12 4Q18 1 22 7M17 4Q23 5 24 11" stroke="#3a3a3a" strokeWidth={2} fill="none" />
      <path d="M4.5 22L17 10.500" stroke="#7a0d10" strokeWidth={3.2} strokeLinecap="round" />
      <path d="M4.5 21.500L17 10" stroke="#c8262a" strokeWidth={1.5} strokeLinecap="round" />
    </svg>
  );
};
const StackGlyph = ({ tint }: { tint: string }) => (
  <svg width={16} height={28} viewBox="0 0 16 28">
    <rect x={0.5} y={4.5} width={15} height={5} rx={1.5} fill="#bdbdbd" />
    <rect x={1} y={11} width={14} height={2.8} rx={1.3} fill={tint} stroke="#b2b2b2" strokeWidth={1.1} />
    <rect x={1} y={16} width={14} height={2.8} rx={1.3} fill={tint} stroke="#b2b2b2" strokeWidth={1.1} />
  </svg>
);

const NodeEditor = () => {
  const by = Object.fromEntries(NODES.map((g) => [g.id, g]));
  const P = 38.133;
  return (
    <Canvas>
      <Wires width={2581} height={625} fill="none">
        <g stroke="#1b1b1b" strokeWidth={1.3}>
          {Array.from({ length: 67 }, (_, i) => (
            <line key={`v${i}`} x1={30.6 + i * P} x2={30.6 + i * P} y1={0} y2={625} />
          ))}
          {Array.from({ length: 16 }, (_, i) => (
            <line key={`h${i}`} y1={30.5 + i * P} y2={30.5 + i * P} x1={0} x2={2581} />
          ))}
        </g>
        {WIRES.map(([a, b]) => {
          const s = by[a], t = by[b];
          const x1 = left(s.col) + 157, x2 = left(t.col), m = (x1 + x2) / 2;
          return (
            <path key={a + b} d={`M${x1} ${s.y}C${m} ${s.y} ${m} ${t.y} ${x2} ${t.y}`} stroke={s.out === AMBER ? "#f5b20a" : "#4f7a88"} strokeWidth={1.4} />
          );
        })}
      </Wires>
      {NODES.map((g) => (
        <NodeBox key={g.id} $x={left(g.col)} $y={g.y}>
          <NodeLabel>{g.id}</NodeLabel>
          <NodeBody $fill={g.fill}>
            <Port $c={g.in} $side="in" />
            <Badge kind={g.kind} />
            <Grow />
            <StackGlyph tint={g.fill} />
            <Port $c={g.out} $side="out" />
          </NodeBody>
        </NodeBox>
      ))}
    </Canvas>
  );
};

const TOP_MENU: [string, number][] = [["View", 77.5], ["Shading", 110], ["Lighting", 107], ["Show", 84], ["Renderer", 120.5], ["Panels", 80]];
const EDIT_MENU: [string, number][] = [["Edit", 66.5], ["View", 78.5], ["Bookmarks", 139.5], ["Tabs", 71.5], ["Options", 107.5], ["Display", 99.5], ["Show", 84], ["Panels", 80]];

export default function App() {
  return (
    <>
      <Global />
      <Window>
        <Workspace>
          <ViewPanel>
            <MenuBar $h={41} $pad={17.5}>
              {TOP_MENU.map(([t, w]) => (
                <MenuItem key={t} $w={w}>{t}</MenuItem>
              ))}
            </MenuBar>
            <Toolbar $h={40} $pad={0.5}>
              {TOP_BAR.map((name, i) =>
                name === null ? (
                  <SepBox key={i} $w={20} $h={32} />
                ) : (
                  <Slot key={i}>
                    <Btn $on={LIT.has(name)} $off={OFF.has(name)}>
                      <Ico>{topIcons[name]}</Ico>
                    </Btn>
                  </Slot>
                )
              )}
              <Slot $w={42}><Ico>{topIcons.aperture}</Ico></Slot>
              <Field $w={78} $h={30} $pl={9}>0.00</Field>
              <Slot $w={44}><Ico>{topIcons.gamma}</Ico></Slot>
              <Field $w={78} $h={30} $pl={11}>1.00</Field>
              <Slot $w={46}><Btn $on><On>ON</On></Btn></Slot>
              <Combo>
                <ComboText>sRGB gamma</ComboText>
                <ComboArrow>
                  <svg width={18} height={11}><path d="M0 0H18L9 10.5Z" fill="#c8c8c8" /></svg>
                </ComboArrow>
              </Combo>
            </Toolbar>
            <Viewport>
              <SceneView />
            </Viewport>
          </ViewPanel>
          <Splitter />
          <EditorPanel>
            <MenuBar $h={45} $pad={19}>
              {EDIT_MENU.map(([t, w]) => (
                <MenuItem key={t} $w={w}>{t}</MenuItem>
              ))}
            </MenuBar>
            <Toolbar $h={57} $pad={1} $lift={5}>
              {EDIT_A.map((name, i) =>
                name === null ? <SepBox key={i} $w={19} $h={40} /> : <EditTool key={i} name={name} />
              )}
              <ThinRule />
              <EditTool name="unlock" w={54} />
              <SepBox $w={20} $h={40} />
              <EditTool name="zero" />
              <EditTool name="inward" />
              <Field $w={54} $h={54} $ml={1} $pl={10} $drop>-1</Field>
              <EditTool name="outward" w={55} />
              <EditTool name="inf" />
              <SepBox $w={19} $h={40} />
              <EditTool name="hash" />
              <EditTool name="magnet" />
              <SepBox $w={19} $h={40} />
              <EditTool name="expand" />
              <Search>
                <span>Search...</span>
                <svg width={20} height={11}><path d="M0 0H20L10 10.5Z" fill="#c8c8c8" /></svg>
              </Search>
            </Toolbar>
            <TabBar>
              <Tab $active>Untitled_1</Tab>
              <Tab>+</Tab>
            </TabBar>
            <TabEdge />
            <CanvasFrame>
              <NodeEditor />
            </CanvasFrame>
          </EditorPanel>
        </Workspace>
      </Window>
    </>
  );
}
